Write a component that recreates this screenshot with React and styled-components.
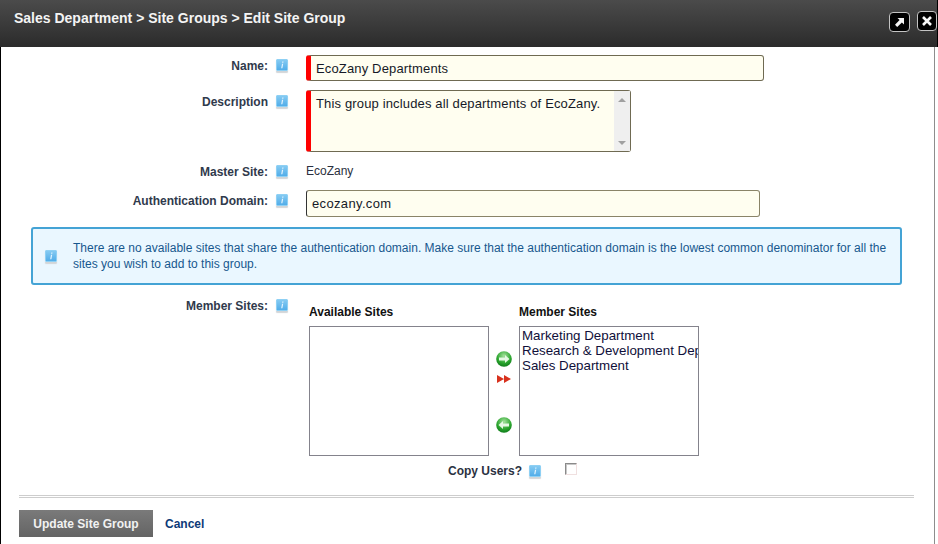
import React from "react";
import styled, { createGlobalStyle } from "styled-components";

const Global = createGlobalStyle`
  html, body { margin: 0; padding: 0; background: #fff; }
  body { font-family: "Liberation Sans", Arial, sans-serif; overflow: hidden; }
`;

const Page = styled.div`
  width: 938px;
  height: 544px;
  overflow: hidden;
  display: flex;
  flex-direction: column;
  background: #fff;
`;

const Header = styled.header`
  height: 47px;
  flex: none;
  box-sizing: border-box;
  background: linear-gradient(#4b4b4b, #2b2b2b);
  border-right: 1px solid #000;
  display: flex;
  justify-content: space-between;
  padding: 10px 0 0 14px;
`;

const Title = styled.h1`
  margin: 0;
  font-size: 14px;
  line-height: 16px;
  font-weight: 700;
  color: #f4f4f4;
`;

const WindowButtons = styled.div`
  display: flex;
  gap: 7px;
  align-items: flex-start;
`;

const WindowButton = styled.div`
  width: ${(p) => p.$w}px;
  height: 20px;
  box-sizing: border-box;
  margin-top: ${(p) => p.$top}px;
  background: #000;
  border: 1.5px solid #c4c4c4;
  border-radius: 4px;
  display: flex;
  align-items: center;
  justify-content: center;
`;

const Body = styled.main`
  flex: 1;
  margin-right: 3px;
  border-left: 1px solid #000;
  border-right: 1px solid #8d8d8d;
  padding-top: 8px;
  display: flex;
  flex-direction: column;
  min-height: 0;
`;

const Row = styled.div`
  display: flex;
  align-items: flex-start;
  margin-top: ${(p) => p.$mt || 0}px;
`;

const Label = styled.label`
  width: 267px;
  flex: none;
  text-align: right;
  font-size: 12px;
  font-weight: 700;
  line-height: 14px;
  color: #303a4c;
  padding-top: ${(p) => p.$pt || 0}px;
`;

const IconSlot = styled.span`
  width: 38px;
  flex: none;
  box-sizing: border-box;
  padding-left: 8px;
  padding-top: ${(p) => p.$pt || 0}px;
  line-height: 0;
`;

const InfoTile = styled.span`
  display: inline-block;
  flex: none;
  box-sizing: border-box;
  width: 12px;
  height: 12px;
  border: 1px solid #8ed0f4;
  border-radius: 1px;
  background: linear-gradient(#84caf2, #52ade9);
  box-shadow: 0 2px 1px #d2d5d8;
  line-height: 0;
`;

const TextField = styled.div`
  box-sizing: border-box;
  width: ${(p) => p.$w}px;
  height: ${(p) => p.$h}px;
  background: #fffef0;
  border: 1px solid ${(p) => (p.$required ? "#6f6a52" : "#8a8468")};
  border-left: ${(p) => (p.$required ? "5px solid #ff0000" : "1px solid #333")};
  border-radius: 3px;
  font-size: 13px;
  line-height: 15px;
  color: #161a28;
  letter-spacing: ${(p) => p.$ls}px;
  padding: 5px 0 0 5px;
  display: flex;
  justify-content: space-between;
`;

const ScrollBar = styled.div`
  width: 16px;
  flex: none;
  margin-top: -5px;
  background: #efefef;
  display: flex;
  flex-direction: column;
  justify-content: space-between;
  align-items: center;
  padding: 7px 0 6px;
`;

const Arrow = styled.span`
  width: 0;
  height: 0;
  border-left: 4px solid transparent;
  border-right: 4px solid transparent;
  ${(p) =>
    p.$up ? "border-bottom: 4px solid #a0a0a0;" : "border-top: 4px solid #a0a0a0;"}
`;

const StaticValue = styled.span`
  font-size: 12px;
  line-height: 14px;
  color: #2a3040;
`;

const InfoBox = styled.div`
  box-sizing: border-box;
  margin: 10px 0 0 30px;
  width: 871px;
  height: 58px;
  background: #eaf7ff;
  border: 2px solid #44a3d5;
  border-radius: 3px;
  display: flex;
  align-items: center;
  padding: 0 10px 0 12px;
  gap: 16px;
`;

const InfoText = styled.p`
  margin: 0;
  font-size: 12px;
  line-height: 16px;
  color: #17578e;
`;

const Columns = styled.div`
  display: flex;
  align-items: flex-start;
  margin-left: 3px;
  margin-top: 6px;
`;

const Column = styled.div`
  display: flex;
  flex-direction: column;
`;

const ColumnTitle = styled.div`
  font-size: 12px;
  font-weight: 700;
  line-height: 14px;
  color: #111;
  margin-bottom: 7px;
`;

const ListBox = styled.div`
  box-sizing: border-box;
  width: 180px;
  height: 130px;
  border: 1px solid #84838c;
  padding: 1px 0 2px 2px;
  overflow: hidden;
  font-size: 13.33px;
  line-height: 15px;
  color: #10103a;
`;

const ListItem = styled.div`
  white-space: nowrap;
  overflow: hidden;
`;

const Movers = styled.div`
  width: 30px;
  height: 130px;
  margin-top: 21px;
  display: flex;
  flex-direction: column;
  align-items: center;
  padding-top: 25px;
  box-sizing: border-box;
  line-height: 0;
`;

const CopyRow = styled.div`
  display: flex;
  align-items: flex-start;
  margin-top: 8px;
  padding-left: 447px;
`;

const CopyLabel = styled.span`
  font-size: 12px;
  font-weight: 700;
  line-height: 14px;
  color: #2b3242;
  margin-right: 7px;
`;

const CopyInfo = styled.span`
  width: 36px;
  padding-top: 1px;
  line-height: 0;
`;

const CheckBox = styled.span`
  width: 12px;
  height: 12px;
  box-sizing: border-box;
  margin-top: -1px;
  background: #fff;
  border: 1px solid;
  border-color: #8a8a8a #f0e0e0 #f0e0e0 #8a8a8a;
  box-shadow: inset 1px 1px 0 #c8c8c8;
`;

const Rule = styled.div`
  margin: 17px 20px 0 18px;
  height: 1px;
  border-top: 1px solid #cdcdcd;
  border-bottom: 1px solid #cdcdcd;
`;

const Footer = styled.div`
  display: flex;
  align-items: center;
  gap: 12px;
  margin: 12px 0 0 18px;
`;

const Submit = styled.button`
  width: 134px;
  height: 27px;
  border: 0;
  padding: 0;
  background: linear-gradient(#7a7a7a, #646464);
  color: #f2f2f2;
  font-family: inherit;
  font-size: 12px;
  font-weight: 700;
`;

const CancelLink = styled.a`
  font-size: 12px;
  font-weight: 700;
  color: #0d3a78;
  padding-top: 1px;
`;

const Info = () => (
  <InfoTile>
    <svg width="10" height="10" viewBox="0 0 10 10">
      <path d="M5.3 1.6h1.2l-.2 1.1H5.1zM5 3.8h1.2L5.4 8.2H4.2z" fill="#e4f4fe" />
    </svg>
  </InfoTile>
);

const GreenArrow = ({ left }) => (
  <svg width="16" height="16" viewBox="0 0 16 16">
    <defs>
      <radialGradient id={left ? "gl" : "gr"} cx="50%" cy="30%" r="70%">
        <stop offset="0" stopColor="#a4e29c" />
        <stop offset="0.65" stopColor="#2ba52e" />
        <stop offset="1" stopColor="#0f7c1a" />
      </radialGradient>
    </defs>
    <circle cx="8" cy="8" r="7.8" fill={`url(#${left ? "gl" : "gr"})`} />
    <path
      d={left ? "M2.5 8l4.5-4v2.6h6v2.8h-6V12z" : "M13.5 8L9 4v2.6H3v2.8h6V12z"}
      fill="#e6f8e4"
    />
  </svg>
);

const MoveAll = () => (
  <svg width="14" height="8" viewBox="0 0 14 8" style={{ margin: "8px 0 34px" }}>
    <path d="M0 0l7 4-7 4zM7 0l7 4-7 4z" fill="#d8321e" />
  </svg>
);

export default function App() {
  return (
    <Page>
      <Global />
      <Header>
        <Title>Sales Department &gt; Site Groups &gt; Edit Site Group</Title>
        <WindowButtons>
          <WindowButton $top={2} $w={21}>
            <svg width="13" height="13" viewBox="0 0 13 13">
              <path d="M4.5 2h6.5v6.5L8.9 6.4 4.2 11 2 8.8l4.6-4.7z" fill="#f4f4f4" />
            </svg>
          </WindowButton>
          <WindowButton $top={1} $w={20}>
            <svg width="12" height="12" viewBox="0 0 12 12">
              <path d="M2 2l8 8M10 2l-8 8" stroke="#f8f8f8" strokeWidth="2.6" />
            </svg>
          </WindowButton>
        </WindowButtons>
      </Header>
      <Body>
        <Row>
          <Label $pt={4}>Name:</Label>
          <IconSlot $pt={4}><Info /></IconSlot>
          <TextField $required $w={458} $h={26} $ls={0.15}>EcoZany Departments</TextField>
        </Row>
        <Row $mt={9}>
          <Label $pt={5}>Description</Label>
          <IconSlot $pt={5}><Info /></IconSlot>
          <TextField $required $w={325} $h={62} $ls={0.15}>
            <span>This group includes all departments of EcoZany.</span>
            <ScrollBar>
              <Arrow $up />
              <Arrow />
            </ScrollBar>
          </TextField>
        </Row>
        <Row $mt={12}>
          <Label $pt={1}>Master Site:</Label>
          <IconSlot $pt={1}><Info /></IconSlot>
          <StaticValue>EcoZany</StaticValue>
        </Row>
        <Row $mt={11}>
          <Label $pt={4}>Authentication Domain:</Label>
          <IconSlot $pt={4}><Info /></IconSlot>
          <TextField $w={454} $h={27} $ls={0.35}>ecozany.com</TextField>
        </Row>
        <InfoBox>
          <Info />
          <InfoText>
            There are no available sites that share the authentication domain. Make sure that the authentication domain is the lowest common denominator for all the sites you wish to add to this group.
          </InfoText>
        </InfoBox>
        <Row $mt={14}>
          <Label>Member Sites:</Label>
          <IconSlot><Info /></IconSlot>
          <Columns>
            <Column>
              <ColumnTitle>Available Sites</ColumnTitle>
              <ListBox />
            </Column>
            <Movers>
              <GreenArrow />
              <MoveAll />
              <GreenArrow left />
            </Movers>
            <Column>
              <ColumnTitle>Member Sites</ColumnTitle>
              <ListBox>
                <ListItem>Marketing Department</ListItem>
                <ListItem>Research &amp; Development Dep</ListItem>
                <ListItem>Sales Department</ListItem>
              </ListBox>
            </Column>
          </Columns>
        </Row>
        <CopyRow>
          <CopyLabel>Copy Users?</CopyLabel>
          <CopyInfo><Info /></CopyInfo>
          <CheckBox />
        </CopyRow>
        <Rule />
        <Footer>
          <Submit>Update Site Group</Submit>
          <CancelLink>Cancel</CancelLink>
        </Footer>
      </Body>
    </Page>
  );
}
